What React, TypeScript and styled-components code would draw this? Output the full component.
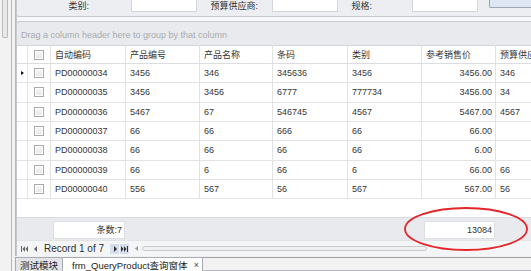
import styled, { createGlobalStyle } from "styled-components";

const GlobalStyle = createGlobalStyle`
  html, body {
    margin: 0;
    padding: 0;
    background: #f0f0f0;
  }
  body {
    font-family: "Liberation Sans", "Noto Sans CJK SC", sans-serif;
    font-size: 9px;
    color: #363636;
  }
`;

type Row = {
  code: string;
  no: string;
  name: string;
  barcode: string;
  kind: string;
  price: string;
  supplier: string;
};

const rows: Row[] = [
  { code: "PD00000034", no: "3456", name: "346", barcode: "345636", kind: "3456", price: "3456.00", supplier: "346" },
  { code: "PD00000035", no: "3456", name: "3456", barcode: "6777", kind: "777734", price: "3456.00", supplier: "34" },
  { code: "PD00000036", no: "5467", name: "67", barcode: "546745", kind: "4567", price: "5467.00", supplier: "4567" },
  { code: "PD00000037", no: "66", name: "66", barcode: "666", kind: "66", price: "66.00", supplier: "" },
  { code: "PD00000038", no: "66", name: "66", barcode: "66", kind: "66", price: "6.00", supplier: "" },
  { code: "PD00000039", no: "66", name: "6", barcode: "66", kind: "6", price: "66.00", supplier: "66" },
  { code: "PD00000040", no: "556", name: "567", barcode: "56", kind: "567", price: "567.00", supplier: "56" },
];

const COLS = "11px 23px 75px 74px 73px 75px 74px 74px 1fr";

export default function App() {
  return (
    <>
      <GlobalStyle />
      <Root>
        <LeftRail>
          <RailThumb />
          <RailLine />
          <RailLine />
        </LeftRail>

        <Main>
          <FilterBar>
            <FieldLabel $w={114} $pr={42}>类别:</FieldLabel>
            <FieldInput />
            <FieldLabel $w={75} $pr={14}>预算供应商:</FieldLabel>
            <FieldInput />
            <FieldLabel $w={74} $pr={40}>规格:</FieldLabel>
            <FieldInput />
            <QueryButton />
          </FilterBar>
          <FilterGap />

          <GroupPanel>Drag a column header here to group by that column</GroupPanel>

          <GridBody>
            <HeaderRow>
              <Cell />
              <CheckCell>
                <CheckBox />
              </CheckCell>
              <Cell>自动编码</Cell>
              <Cell>产品编号</Cell>
              <Cell>产品名称</Cell>
              <Cell>条码</Cell>
              <Cell>类别</Cell>
              <Cell>参考销售价</Cell>
              <Cell $last>预算供应商</Cell>
            </HeaderRow>
            {rows.map((r, i) => (
              <DataRow key={r.code}>
                <IndicatorCell>{i === 0 && <Indicator />}</IndicatorCell>
                <CheckCell>
                  <CheckBox />
                </CheckCell>
                <Cell>{r.code}</Cell>
                <Cell>{r.no}</Cell>
                <Cell>{r.name}</Cell>
                <Cell>{r.barcode}</Cell>
                <Cell>{r.kind}</Cell>
                <Cell $right>{r.price}</Cell>
                <Cell $last>{r.supplier}</Cell>
              </DataRow>
            ))}
          </GridBody>

          <FooterRow>
            <span />
            <span />
            <SummaryBox>条数:7</SummaryBox>
            <span />
            <span />
            <span />
            <span />
            <SummaryBox>13084</SummaryBox>
            <span />
          </FooterRow>

          <Navigator>
            <NavBtn aria-label="first">
              <svg width="7" height="6" viewBox="0 0 7 6">
                <rect x="0" y="0" width="1" height="6" fill="#666" />
                <path d="M4 0 L1.5 3 L4 6 Z M7 0 L4.5 3 L7 6 Z" fill="#666" />
              </svg>
            </NavBtn>
            <NavBtn aria-label="prev">
              <svg width="4" height="6" viewBox="0 0 4 6">
                <path d="M3 0 L0 3 L3 6 Z" fill="#666" />
              </svg>
            </NavBtn>
            <RecordText>Record 1 of 7</RecordText>
            <NavBtn $active aria-label="next">
              <svg width="4" height="6" viewBox="0 0 4 6">
                <path d="M1 0 L4 3 L1 6 Z" fill="#333" />
              </svg>
            </NavBtn>
            <NavBtn $active aria-label="last">
              <svg width="7" height="6" viewBox="0 0 7 6">
                <path d="M0 0 L2.5 3 L0 6 Z M3 0 L5.5 3 L3 6 Z" fill="#333" />
                <rect x="6" y="0" width="1" height="6" fill="#333" />
              </svg>
            </NavBtn>
            <ScrollArrow>
              <svg width="3" height="5" viewBox="0 0 3 5">
                <path d="M3 0 L0 2.5 L3 5 Z" fill="#999" />
              </svg>
            </ScrollArrow>
            <ScrollTrack />
          </Navigator>

          <TabStrip>
            <Tab>测试模块</Tab>
            <Tab $active>
              frm_QueryProduct查询窗体
              <TabClose>×</TabClose>
            </Tab>
            <TabRest />
          </TabStrip>
        </Main>

        <Annotation width="531" height="271" viewBox="0 0 531 271">
          <ellipse cx="466" cy="229" rx="61" ry="21" fill="none" stroke="#e4262a" strokeWidth="1.8" />
        </Annotation>
      </Root>
    </>
  );
}

const Root = styled.div`
  position: relative;
  width: 531px;
  height: 271px;
  overflow: hidden;
  display: flex;
  background: #f0f0f0;
`;

const LeftRail = styled.div`
  width: 16px;
  flex: none;
  display: flex;
  gap: 2px;
  padding-left: 2px;
  box-sizing: border-box;
  background: #f2f2f2;
`;

const RailThumb = styled.div`
  width: 6px;
  height: 38px;
  box-sizing: border-box;
  border: 1px solid #b9b9b9;
  border-top: none;
  border-radius: 0 0 2px 2px;
  background: #e8e8e8;
`;

const RailLine = styled.div`
  width: 1px;
  height: 100%;
  background: #b8b8b8;
  margin-left: 1px;
`;

const Main = styled.div`
  flex: 1;
  min-width: 0;
  display: flex;
  flex-direction: column;
  border-left: 1px solid #c4c7cd;
  background: #ffffff;
`;

const FilterBar = styled.div`
  height: 17px;
  box-sizing: border-box;
  display: flex;
  align-items: flex-start;
  background: #eceef2;
  border-bottom: 1px solid #c6c9cf;
  border-bottom-left-radius: 3px;
  margin-left: -1px;
  border-left: 1px solid #c6c9cf;
`;

const FieldLabel = styled.div<{ $w: number; $pr: number }>`
  width: ${({ $w }) => $w}px;
  padding-right: ${({ $pr }) => $pr}px;
  box-sizing: border-box;
  text-align: right;
  line-height: 12px;
  white-space: nowrap;
  color: #333;
`;

const FieldInput = styled.div`
  width: 66px;
  height: 12px;
  box-sizing: border-box;
  background: #ffffff;
  border: 1px solid #d3d6dc;
  border-top: none;
  flex: none;
`;

const QueryButton = styled.div`
  margin-left: 11px;
  flex: 1;
  height: 8px;
  box-sizing: border-box;
  background: #dfe7f5;
  border: 1px solid #9aa5b8;
  border-top: none;
  border-right: none;
  border-bottom-left-radius: 2px;
`;

const FilterGap = styled.div`
  height: 4px;
  background: #f6f7f9;
`;

const GroupPanel = styled.div`
  height: 24px;
  box-sizing: border-box;
  border-top: 1px solid #c8cbd1;
  border-top-left-radius: 3px;
  margin-left: -1px;
  border-left: 1px solid #c8cbd1;
  background: #e9eaee;
  color: #a7aab0;
  padding: 7px 0 0 4px;
  white-space: nowrap;
  line-height: 12px;
`;

const GridBody = styled.div`
  flex: 1;
  background: #ffffff;
`;

const HeaderRow = styled.div`
  display: grid;
  grid-template-columns: ${COLS};
  height: 19px;
  box-sizing: border-box;
  border-top: 1px solid #d4d6db;
  border-bottom: 1px solid #dcdde0;
  background: #ffffff;
`;

const DataRow = styled.div`
  display: grid;
  grid-template-columns: ${COLS};
  height: 19.33px;
  box-sizing: border-box;
  border-bottom: 1px solid #e3e3e3;
`;

const Cell = styled.div<{ $right?: boolean; $last?: boolean }>`
  box-sizing: border-box;
  border-right: ${({ $last }) => ($last ? "none" : "1px solid #e2e2e2")};
  padding: 0 ${({ $right }) => ($right ? "3px" : "0")} 0 ${({ $right }) => ($right ? "0" : "4px")};
  display: flex;
  align-items: center;
  justify-content: ${({ $right }) => ($right ? "flex-end" : "flex-start")};
  white-space: nowrap;
  overflow: hidden;
  color: #363636;
`;

const IndicatorCell = styled(Cell)`
  padding: 0 0 0 4px;
`;

const Indicator = styled.div`
  width: 0;
  height: 0;
  border-top: 2.5px solid transparent;
  border-bottom: 2.5px solid transparent;
  border-left: 3px solid #111;
`;

const CheckCell = styled(Cell)`
  justify-content: center;
  padding: 0 1px 0 0;
`;

const CheckBox = styled.div`
  width: 10px;
  height: 10px;
  box-sizing: border-box;
  border: 1px solid #aaaaaa;
  background: linear-gradient(#f7f7f7, #e6e6e6);
  box-shadow: inset 0 0 0 1px #ffffff;
`;

const FooterRow = styled.div`
  display: grid;
  grid-template-columns: ${COLS};
  height: 23px;
  box-sizing: border-box;
  align-items: center;
  padding-top: 1px;
  background: #e9eaee;
  border-top: 1px solid #d9dbe0;
`;

const SummaryBox = styled.div`
  height: 18px;
  margin: 0 1px 0 2px;
  box-sizing: border-box;
  background: #ffffff;
  border: 1px solid #dcdee3;
  display: flex;
  align-items: center;
  justify-content: flex-end;
  padding-right: 2px;
  color: #333;
  white-space: nowrap;
`;

const Navigator = styled.div`
  height: 15px;
  display: flex;
  align-items: center;
  padding-left: 1px;
  background: #f4f5f7;
  border-top: 1px solid #e2e3e7;
`;

const NavBtn = styled.div<{ $active?: boolean }>`
  width: ${({ $active }) => ($active ? "9px" : "12px")};
  height: 10px;
  margin-right: ${({ $active }) => ($active ? "1px" : "0")};
  display: flex;
  align-items: center;
  justify-content: center;
  background: ${({ $active }) => ($active ? "#d8dfec" : "transparent")};
`;

const RecordText = styled.div`
  font-size: 10px;
  color: #2f2f2f;
  padding: 0 6px 0 2px;
  white-space: nowrap;
`;

const ScrollArrow = styled.div`
  width: 12px;
  display: flex;
  justify-content: center;
`;

const ScrollTrack = styled.div`
  width: 285px;
  height: 5px;
  box-sizing: border-box;
  border: 1px solid #c9cacd;
  border-radius: 3px;
  background: #f0f0f0;
`;

const TabStrip = styled.div`
  height: 15px;
  display: flex;
  align-items: flex-end;
  background: #f0f0f0;
  margin-left: -2px;
`;

const Tab = styled.div<{ $active?: boolean }>`
  height: 14px;
  box-sizing: border-box;
  padding: ${({ $active }) => ($active ? "0 0 0 9px" : "0")};
  width: ${({ $active }) => ($active ? "140px" : "48px")};
  display: flex;
  align-items: center;
  justify-content: ${({ $active }) => ($active ? "flex-start" : "center")};
  gap: 6px;
  white-space: nowrap;
  overflow: hidden;
  font-size: 9.5px;
  color: #222;
  background: ${({ $active }) => ($active ? "#ffffff" : "#e2e4e8")};
  border: 1px solid #a9acb2;
  border-bottom: none;
  border-left: ${({ $active }) => ($active ? "none" : "1px solid #a9acb2")};
`;

const TabClose = styled.span`
  font-size: 9px;
  color: #444;
`;

const TabRest = styled.div`
  flex: 1;
  height: 14px;
  box-sizing: border-box;
  border-top: 1px solid #9ea1a6;
  border-bottom: 1px solid #b6b8bc;
  background: #f2f2f2;
`;

const Annotation = styled.svg`
  position: absolute;
  left: 0;
  top: 0;
  pointer-events: none;
`;
